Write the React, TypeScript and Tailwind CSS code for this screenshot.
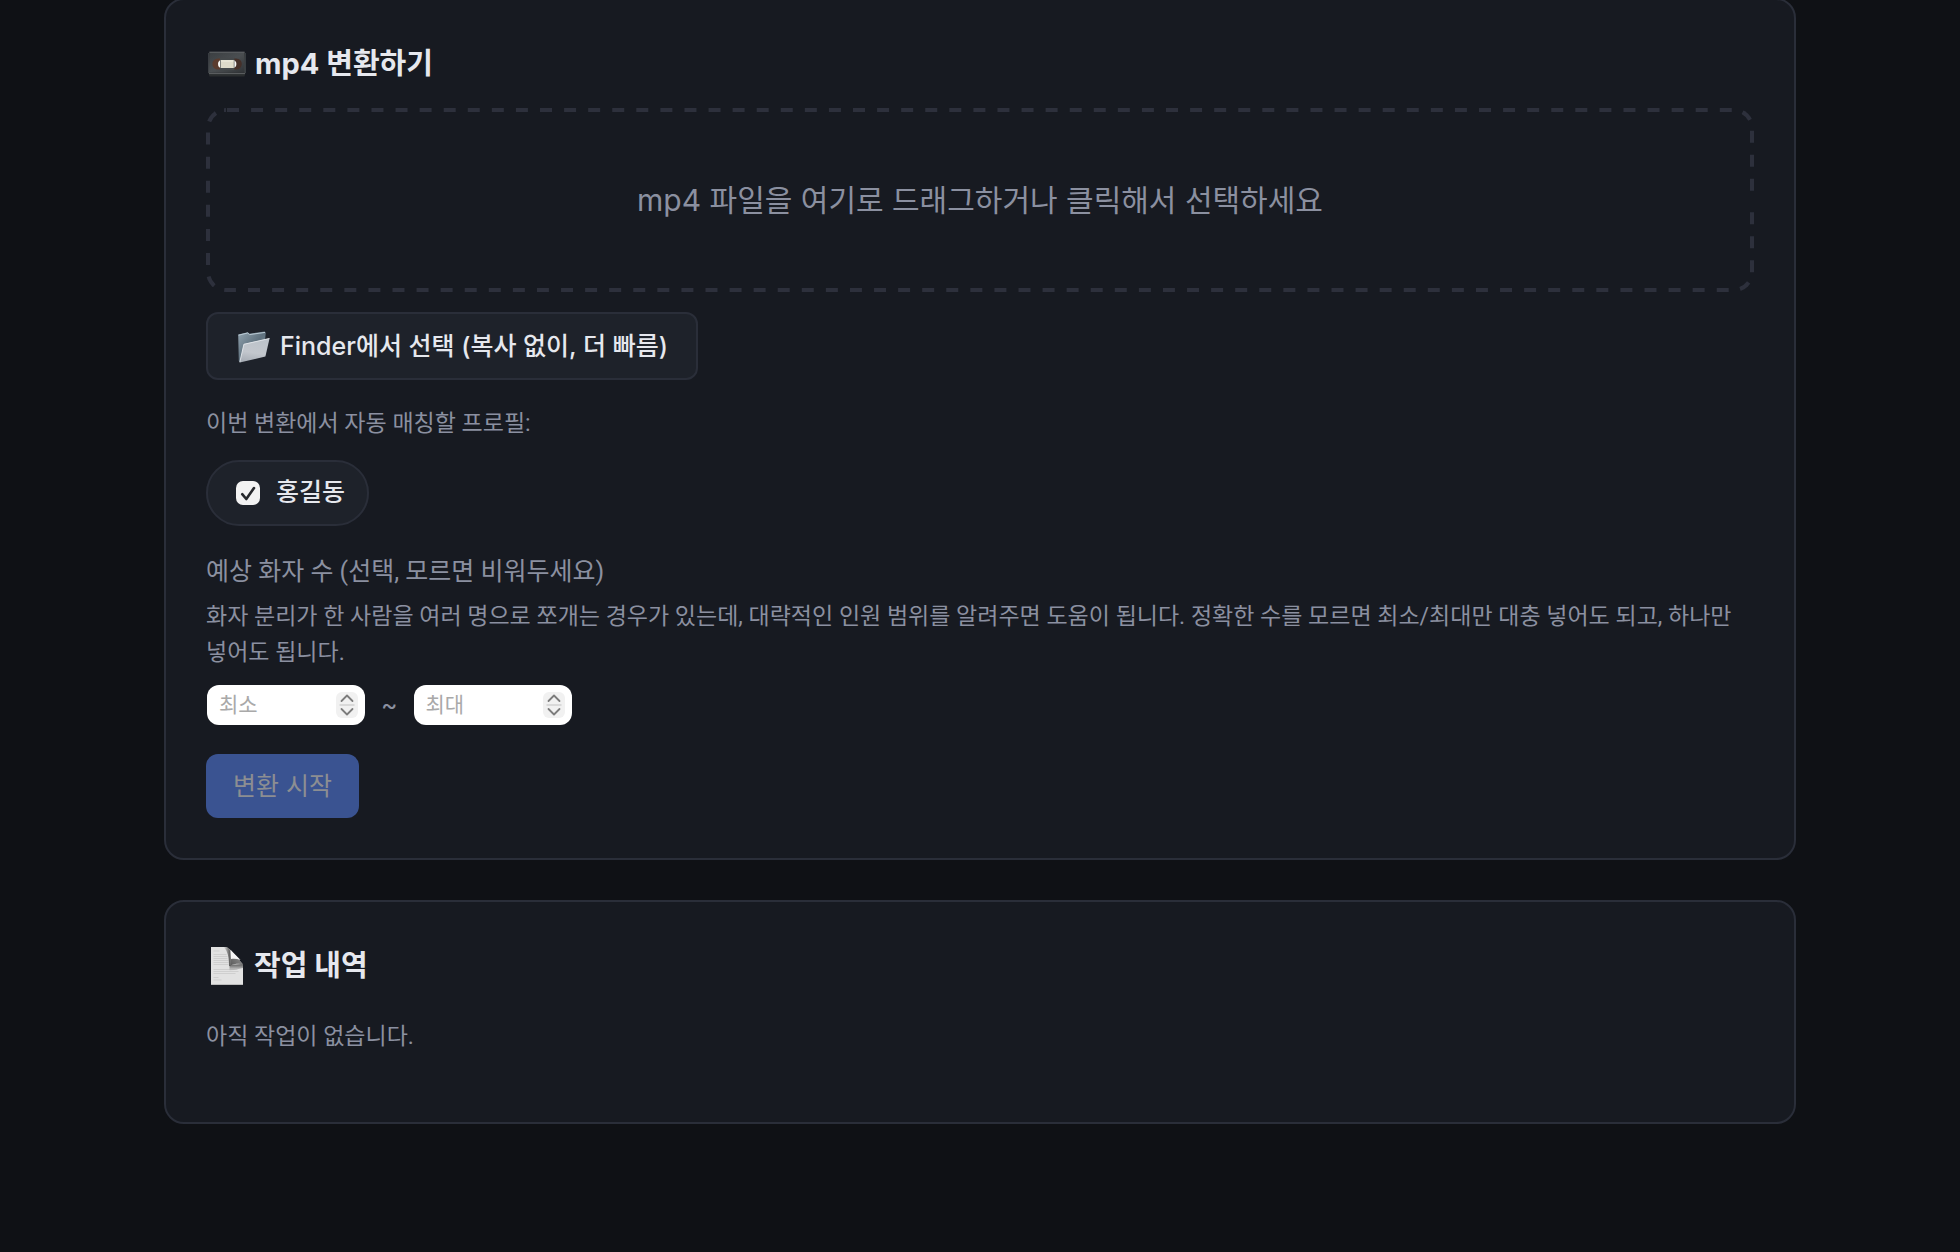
import { useState, type ReactNode } from "react";

function CassetteIcon() {
  return (
    <svg viewBox="0 0 38 26" className="h-[26px] w-[38px] shrink-0" aria-hidden="true">
      <defs>
        <linearGradient id="tape" x1="0" y1="0" x2="1" y2="1">
          <stop offset="0" stopColor="#3b3f42" />
          <stop offset="0.500" stopColor="#4a4e51" />
          <stop offset="1" stopColor="#303336" />
        </linearGradient>
      </defs>
      <path d="M1.200 1h35.600l.7 21-1 3.400H1.500l-1-3.400z" fill="#2a2d2f" />
      <path d="M1.800 1.800h34.400l.7 20H1.100z" fill="url(#tape)" />
      <path d="M1.400 1.200h35.200" stroke="#707477" strokeWidth="0.900" />
      <path d="M.8 2v20M37.200 2v20" stroke="#5d6164" strokeWidth="0.700" />
      <path d="M1 22.600h36" stroke="#65696c" strokeWidth="0.900" />
      <path d="M12.600 7.400H10a5.600 5.600 0 0 0 0 11.200h2.600z" fill="#5b3c2e" />
      <path d="M25.600 7.400h2.600a5.600 5.600 0 0 1 0 11.200h-2.600z" fill="#453029" />
      <path d="M13 8.700a4.600 4.600 0 0 0 0 8.600z" fill="#f8f8f6" />
      <path d="M25.400 8.700a4.600 4.600 0 0 1 0 8.600z" fill="#f8f8f6" />
      <path d="M12 6.800h14.400v12.400H12z" fill="#45494b" />
      <rect x="12.600" y="9" width="13.200" height="8" fill="#dedbca" />
      <path d="M13 10h12.400" stroke="#efeddf" strokeWidth="1" />
    </svg>
  );
}

function FolderIcon() {
  return (
    <svg viewBox="0 0 34 32" className="h-8 w-[34px] shrink-0" aria-hidden="true">
      <defs>
        <linearGradient id="folderBack" x1="0" y1="0" x2="1" y2="1">
          <stop offset="0" stopColor="#93a5b1" />
          <stop offset="0.5" stopColor="#5f717e" />
          <stop offset="1" stopColor="#7b8d99" />
        </linearGradient>
        <linearGradient id="folderFront" x1="0.6" y1="0" x2="0.4" y2="1">
          <stop offset="0" stopColor="#bcc3ca" />
          <stop offset="0.6" stopColor="#c3c7cd" />
          <stop offset="1" stopColor="#a7adb5" />
        </linearGradient>
      </defs>
      <path d="M1.200 3.600 10.800 1.200l1.800 1.600L27.600.4l1.200 1.400-1 9.200L3 31.200 1.800 30z" fill="url(#folderBack)" />
      <path d="M1.600 4.200 10.700 2l1.800 1.600L28 1.400" fill="none" stroke="#b8c8d2" strokeWidth="1" />
      <path d="M6.800 13 32.600 7.200 28.400 25.600 2.800 31.600z" fill="url(#folderFront)" />
      <path d="M2.800 31.200 6.900 13.300 32.400 7.500" fill="none" stroke="#e4e8ec" strokeWidth="0.9" />
    </svg>
  );
}

function PageIcon() {
  return (
    <svg viewBox="0 0 32 38" className="mr-[3px] ml-[5px] h-[38px] w-8 shrink-0" aria-hidden="true">
      <defs>
        <linearGradient id="shadeLeft" x1="0" y1="0" x2="1" y2="0">
          <stop offset="0" stopColor="#505050" stopOpacity="0" />
          <stop offset="1" stopColor="#505050" />
        </linearGradient>
        <linearGradient id="shadeBelow" x1="0" y1="0" x2="0" y2="1">
          <stop offset="0" stopColor="#5a5a5a" />
          <stop offset="1" stopColor="#5a5a5a" stopOpacity="0" />
        </linearGradient>
        <linearGradient id="curl" x1="0" y1="1" x2="1" y2="0">
          <stop offset="0" stopColor="#5a5a5a" />
          <stop offset="1" stopColor="#a0a0a0" />
        </linearGradient>
      </defs>
      <path d="M0 0h15.500C18 1 19.500 3 21 5l11 12.500V38H0z" fill="#e2e2e2" />
      <g stroke="#cfcfcf" strokeWidth="1">
        <path d="M2.500 4h6M2.500 7.500h13M2.500 9.500h14M2.500 11.500h14M2.500 13.500h15M2.500 15.500h15M2.500 17.500h15" />
        <path d="M2.500 22.500h24M2.500 24.500h25M2.500 26.500h22M2.500 30.500h5M2.500 33h8" />
      </g>
      <path d="M12.500 0h3.500c2.500 1.200 3.500 3.500 3.500 7v12h-1.500C18 11 17 4 12.500 0z" fill="url(#shadeLeft)" />
      <path d="M18.500 18 32 17v4l-13.500 3z" fill="url(#shadeBelow)" />
      <path d="M19.500 2.500 32 17.500c-4-1.200-8.500-.7-12.800 1.300z" fill="url(#curl)" />
      <path d="M19.600 3 29.600 13c-3.500-1.200-6.500-1.500-9.600-1z" fill="#f6f6f6" />
      <path d="M0 37.500h32" stroke="#bdbdbd" strokeWidth="1" />
    </svg>
  );
}

function DashedOutline() {
  return (
    <span className="pointer-events-none absolute inset-0 overflow-hidden rounded-[20px] text-[#2d303c]" aria-hidden="true">
      <svg className="absolute inset-0 size-full [clip-path:polygon(18px_0,100%_0,100%_50%,18px_50%)]">
        <rect width="100%" height="100%" rx="20" fill="none" stroke="currentColor" strokeWidth="8" strokeDasharray="12 12.077" strokeDashoffset="-1" />
      </svg>
      <svg className="absolute inset-0 size-full [clip-path:polygon(0_0,18px_0,18px_50%,100%_50%,100%_100%,0_100%)]">
        <rect width="100%" height="100%" rx="20" fill="none" stroke="currentColor" strokeWidth="8" strokeDasharray="12 12.077" strokeDashoffset="-10.240" />
      </svg>
    </span>
  );
}

function Card({ children, className = "" }: { children: ReactNode; className?: string }) {
  return (
    <section className={"rounded-[20px] border-2 border-[#2a2e39] bg-[#171a21] px-10 pt-[42px] " + className}>
      {children}
    </section>
  );
}

function Note({ children, className = "" }: { children: ReactNode; className?: string }) {
  return <p className={"font-['Roboto','Noto_Sans_CJK_KR',sans-serif] text-[#8b90a0] " + className}>{children}</p>;
}

function CountInput({ label }: { label: string }) {
  const [value, setValue] = useState("");
  return (
    <span className="relative flex">
      <input
        type="number"
        min={1}
        aria-label={label}
        placeholder={label}
        value={value}
        onChange={(e) => setValue(e.target.value)}
        className="h-10 w-[158px] [appearance:textfield] rounded-[12px] bg-white pr-10 pl-3 text-[21px] leading-10 text-black outline-none placeholder:text-[#a9a9a9] [&::-webkit-inner-spin-button]:appearance-none"
      />
      <svg viewBox="0 0 22 26" className="pointer-events-none absolute top-[7px] right-[7px] h-[26px] w-[22px]" aria-hidden="true">
        <rect width="22" height="26" rx="6" fill="#f1f1f1" />
        <path d="M3.500 13h15" stroke="#d9d9d9" strokeWidth="2" />
        <path d="M5.500 9 11 3.500 16.500 9M5.500 17 11 22.500 16.500 17" fill="none" stroke="#7d7d7d" strokeWidth="1.800" strokeLinecap="round" strokeLinejoin="round" />
      </svg>
    </span>
  );
}

export default function App() {
  const [checked, setChecked] = useState(true);
  return (
    <div className="flow-root min-h-screen bg-[#0f1115] font-['Inter','Noto_Sans_CJK_KR',sans-serif] break-keep text-[#e6e8ee]">
      <main className="mx-auto -mt-0.5 flex max-w-[1632px] flex-col gap-10">
        <Card className="pb-10">
          <h2 className="flex h-11 items-center gap-[9px] pl-0.5 text-[29px] leading-10 font-bold">
            <CassetteIcon />
            mp4 변환하기
          </h2>
          <button type="button" className="relative mt-[22px] flex h-[184px] w-full items-center justify-center text-[30px] text-[#8b90a0]">
            <DashedOutline />
            mp4 파일을 여기로 드래그하거나 클릭해서 선택하세요
          </button>
          <button type="button" className="mt-5 flex h-[68px] items-center gap-[9px] rounded-[12px] border-2 border-[#2a2e39] bg-[#1e222a] pt-0.5 pr-7 pl-[29px] text-[25px] font-medium">
            <FolderIcon />
            Finder에서 선택 (복사 없이, 더 빠름)
          </button>
          <Note className="mt-[26px] text-[23px] leading-9">이번 변환에서 자동 매칭할 프로필:</Note>
          <label className="mt-[18px] flex h-[66px] w-fit items-center gap-4 rounded-full border-2 border-[#2a2e39] bg-[#1e222a] pr-[22px] pl-7 text-[25px] font-medium">
            <span className="relative flex size-6">
              <input
                type="checkbox"
                checked={checked}
                onChange={(e) => setChecked(e.target.checked)}
                className="size-6 appearance-none rounded-[7px] bg-[#f2f2f2]"
              />
              {checked && (
                <svg viewBox="0 0 24 24" className="pointer-events-none absolute inset-0 size-6" aria-hidden="true">
                  <path d="M6.200 13.200 10.300 18 18 7" fill="none" stroke="#26282c" strokeWidth="2.600" strokeLinecap="round" strokeLinejoin="round" />
                </svg>
              )}
            </span>
            홍길동
          </label>
          <Note className="mt-[26px] text-[25px] leading-10">예상 화자 수 (선택, 모르면 비워두세요)</Note>
          <Note className="mt-[7px] text-[23px] leading-9">
            화자 분리가 한 사람을 여러 명으로 쪼개는 경우가 있는데, 대략적인 인원 범위를 알려주면 도움이 됩니다. 정확한 수를 모르면
            최소/최대만 대충 넣어도 되고, 하나만 넣어도 됩니다.
          </Note>
          <div className="mt-[14px] flex items-center gap-4 px-px text-[25px] leading-10 text-[#8b90a0]">
            <CountInput label="최소" />
            <span>~</span>
            <CountInput label="최대" />
          </div>
          <button type="button" disabled className="mt-[29px] flex h-16 items-center rounded-[12px] bg-[#3a5391] px-[27px] pt-0.5 text-[25px] text-[#8c8e92]">
            변환 시작
          </button>
        </Card>
        <Card className="pb-[67px]">
          <h2 className="flex h-11 items-center gap-2 text-[29px] leading-10 font-bold">
            <PageIcon />
            작업 내역
          </h2>
          <Note className="mt-[31px] text-[23px] leading-9">아직 작업이 없습니다.</Note>
        </Card>
      </main>
    </div>
  );
}
